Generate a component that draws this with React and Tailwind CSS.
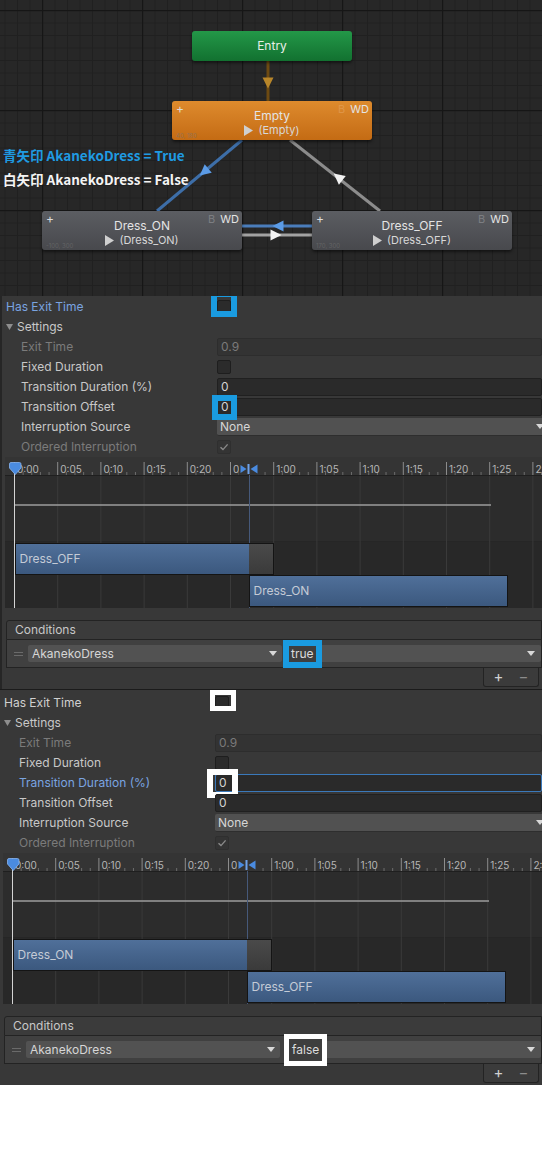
import React from "react";

// --- animator graph ---------------------------------------------------------

function arrowPts(cx, cy, dx, dy, len = 11, half = 5.5) {
  const m = Math.hypot(dx, dy);
  const ux = dx / m;
  const uy = dy / m;
  const tx = cx + (ux * len) / 2;
  const ty = cy + (uy * len) / 2;
  const bx = cx - (ux * len) / 2;
  const by = cy - (uy * len) / 2;
  return `${tx},${ty} ${bx - uy * half},${by + ux * half} ${bx + uy * half},${by - ux * half}`;
}

function PlayIcon() {
  return (
    <svg width="9" height="11" viewBox="0 0 9 11">
      <path d="M0 0L9 5.5L0 11Z" fill="#cfcfcf" />
    </svg>
  );
}

function StateNode({ pos, bg, title, motion, coords, bTone }) {
  return (
    <div
      className={`absolute ${pos} h-[39px] w-[200px] rounded-[3px] ${bg} text-[#e4e4e4] shadow-[0_2px_3px_rgba(0,0,0,0.5)]`}
    >
      <span className="absolute left-[4px] top-[1px] text-[12px] leading-[14px] text-[#dcdcdc]">+</span>
      <span className="absolute right-[3px] top-[2px] flex gap-[5px] text-[11px] leading-[12px]">
        <span className={bTone}>B</span>
        <span>WD</span>
      </span>
      <div className="flex flex-col items-center pt-[7px] leading-[15px]">
        <span className="text-[12px]">{title}</span>
        <span className="flex items-center gap-[5px] text-[11px] text-[#d8d8d8]">
          <PlayIcon />({motion})
        </span>
      </div>
      <span className="absolute bottom-[1px] left-[4px] text-[6px] leading-[6px] text-[#747474] opacity-60">
        {coords}
      </span>
    </div>
  );
}

function Graph() {
  return (
    <div className="relative h-[296px] overflow-hidden bg-[#272727]">
      <svg className="absolute inset-0" width="542" height="296">
        <defs>
          <pattern id="minorGrid" x="42" y="10" width="12.5" height="12.5" patternUnits="userSpaceOnUse">
            <path d="M0 0.5H12.5M0.5 0V12.5" stroke="#202020" strokeWidth="1" fill="none" />
          </pattern>
          <pattern id="majorGrid" x="42" y="10" width="100" height="100" patternUnits="userSpaceOnUse">
            <path d="M0 0.5H100M0.5 0V100" stroke="#161616" strokeWidth="1.5" fill="none" />
          </pattern>
        </defs>
        <rect width="542" height="296" fill="url(#minorGrid)" />
        <rect width="542" height="296" fill="url(#majorGrid)" />

        {/* entry -> empty */}
        <line x1="268" y1="61" x2="268" y2="101" stroke="#6d4a12" strokeWidth="3" />
        <polygon points={arrowPts(268, 83, 0, 1)} fill="#b8862a" />

        {/* empty -> dress_on (blue) */}
        <line x1="242" y1="140" x2="157" y2="211" stroke="#3d6ea8" strokeWidth="3" />
        <polygon points={arrowPts(204, 172, -85, 71)} fill="#5b9be6" />

        {/* dress_off -> empty (white) */}
        <line x1="290" y1="140" x2="380" y2="211" stroke="#8c8c8c" strokeWidth="3" />
        <polygon points={arrowPts(338, 177, -90, -71)} fill="#f2f2f2" />

        {/* between the two dress states */}
        <line x1="242" y1="226" x2="312" y2="226" stroke="#4a7dbb" strokeWidth="3" />
        <polygon points={arrowPts(278, 226, -1, 0)} fill="#5b9be6" />
        <line x1="242" y1="235" x2="312" y2="235" stroke="#a2a2a2" strokeWidth="3" />
        <polygon points={arrowPts(276, 235, 1, 0)} fill="#f2f2f2" />
      </svg>

      <div className="absolute left-[192px] top-[31px] flex h-[30px] w-[160px] items-center justify-center rounded-[3px] bg-gradient-to-b from-[#239848] to-[#127130] text-[12px] text-[#e8eee8] shadow-[0_2px_3px_rgba(0,0,0,0.5)]">
        Entry
      </div>

      <StateNode
        pos="left-[172px] top-[101px]"
        bg="bg-gradient-to-b from-[#de8b2d] to-[#c46b13]"
        title="Empty"
        motion="Empty"
        coords="40, 180"
        bTone="text-[#e6a866] opacity-50"
      />
      <StateNode
        pos="left-[42px] top-[211px]"
        bg="bg-gradient-to-b from-[#5b5d62] to-[#48494d]"
        title="Dress_ON"
        motion="Dress_ON"
        coords="-100, 300"
        bTone="text-[#7c7e82]"
      />
      <StateNode
        pos="left-[312px] top-[211px]"
        bg="bg-gradient-to-b from-[#5b5d62] to-[#48494d]"
        title="Dress_OFF"
        motion="Dress_OFF"
        coords="170, 300"
        bTone="text-[#7c7e82]"
      />

      <div className="absolute left-[3px] top-[146px] font-['Noto_Sans_CJK_JP',sans-serif] text-[13.5px] font-bold leading-[18px] text-[#1f9be2]">
        青矢印 AkanekoDress = True
      </div>
      <div className="absolute left-[3px] top-[170px] font-['Noto_Sans_CJK_JP',sans-serif] text-[13.5px] font-bold leading-[18px] text-[#f4f4f4]">
        白矢印 AkanekoDress = False
      </div>
    </div>
  );
}

// --- inspector bits ---------------------------------------------------------

function Row({ label, indent, tone = "text-[#c8c8c8]", children }) {
  return (
    <div className="flex h-5 items-center">
      <div className={`w-[211px] shrink-0 leading-5 ${indent ? "pl-[15px]" : ""} ${tone}`}>{label}</div>
      <div className="flex min-w-0 flex-1 items-center">{children}</div>
    </div>
  );
}

function CheckBox({ checked, disabled, children }) {
  return (
    <span
      className={`relative flex h-[14px] w-[14px] items-center justify-center rounded-[2px] border ${
        disabled ? "border-[#2f2f2f] bg-[#343434]" : "border-[#1e1e1e] bg-[#2b2b2b]"
      }`}
    >
      {checked && (
        <svg width="10" height="10" viewBox="0 0 10 10">
          <path d="M1.5 5.2L4 7.6L8.6 2.4" stroke="#8a8a8a" strokeWidth="1.4" fill="none" />
        </svg>
      )}
      {children}
    </span>
  );
}

function Field({ value, disabled, focused, children }) {
  let look = "border-[#202020] bg-[#2a2a2a] text-[#d4d4d4]";
  if (disabled) look = "border-[#2d2d2d] bg-[#333333] text-[#7a7a7a]";
  if (focused) look = "border-[#3a79bb] bg-[#2a2a2a] text-[#d4d4d4]";
  return (
    <div className={`relative flex h-[18px] flex-1 items-center rounded-[2px] border pl-[3px] leading-4 ${look}`}>
      {value}
      {children}
    </div>
  );
}

function DropArrow() {
  return (
    <svg width="8" height="5" viewBox="0 0 8 5">
      <path d="M0 0H8L4 5Z" fill="#d8d8d8" />
    </svg>
  );
}

function Dropdown({ value }) {
  return (
    <div className="-mr-[2px] flex h-[18px] flex-1 items-center justify-between rounded-[2px] border-b border-[#2e2e2e] bg-[#515151] pl-[3px] leading-4 text-[#d6d6d6]">
      <span>{value}</span>
      <DropArrow />
    </div>
  );
}

// --- transition timeline ----------------------------------------------------

const TICK0 = 9.5;
const STEP = 43.2;
const LABELS = ["0:00", "0:05", "0:10", "0:15", "0:20", "0:25", "1:00", "1:05", "1:10", "1:15", "1:20", "1:25", "2:00"];

function Timeline({ id, first, second }) {
  const xs = LABELS.map((_, i) => TICK0 + i * STEP);
  return (
    <div className="ml-[3px] h-[151px] overflow-hidden">
      <svg width="540" height="151" className="block" fontFamily="Inter, sans-serif">
        <defs>
          <linearGradient id={`bar${id}`} x1="0" y1="0" x2="0" y2="1">
            <stop offset="0" stopColor="#50709a" />
            <stop offset="1" stopColor="#3b587e" />
          </linearGradient>
          <linearGradient id={`gray${id}`} x1="0" y1="0" x2="0" y2="1">
            <stop offset="0" stopColor="#4a4a4a" />
            <stop offset="1" stopColor="#3a3a3a" />
          </linearGradient>
        </defs>
        <rect x="0" y="0" width="540" height="19" fill="#343434" />
        <rect x="0" y="19" width="540" height="65" fill="#2c2c2c" />
        <rect x="0" y="84" width="540" height="67" fill="#282828" />
        <line x1="0" y1="18.5" x2="540" y2="18.5" stroke="#1f1f1f" />
        <line x1="0" y1="84.5" x2="540" y2="84.5" stroke="#262626" />

        {xs.slice(1).map((x) => (
          <line key={`g${x}`} x1={x} y1="19" x2={x} y2="151" stroke="#3a3a3a" />
        ))}
        {xs.map((x, i) => (
          <g key={`t${i}`}>
            <line x1={x} y1="5" x2={x} y2="18" stroke="#8c8c8c" />
            {[1, 2, 3, 4].map((j) => (
              <line key={j} x1={x + (j * STEP) / 5} y1="15" x2={x + (j * STEP) / 5} y2="18" stroke="#6c6c6c" />
            ))}
            <text x={x + 2.5} y="16" fontSize="10" fill="#b6b6b6">
              {LABELS[i]}
            </text>
          </g>
        ))}

        <line x1={TICK0} y1="48" x2="486" y2="48" stroke="#9c9c9c" strokeWidth="1.5" />
        <line x1="244.5" y1="17" x2="244.5" y2="151" stroke="#46597a" />

        <rect x="10.5" y="86.5" width="258" height="31" fill={`url(#gray${id})`} stroke="#141414" />
        <rect x="10.5" y="86.5" width="233.5" height="31" fill={`url(#bar${id})`} />
        <rect x="10.5" y="86.5" width="258" height="31" fill="none" stroke="#141414" />
        <text x="14.5" y="106" fontSize="12" fill="#c4cbd6">
          {first}
        </text>
        <rect x="244.5" y="118.5" width="258" height="31" fill={`url(#bar${id})`} stroke="#141414" />
        <text x="248.5" y="138" fontSize="12" fill="#c4cbd6">
          {second}
        </text>

        <line x1={TICK0} y1="15" x2={TICK0} y2="151" stroke="#d4d4d4" />
        <path d="M4.5 7Q4.5 5.5 6 5.5H14.5Q16 5.5 16 7V11L10.25 17.5L4.5 11Z" fill="#4a8be0" stroke="#86b4f0" strokeWidth="0.8" />

        <rect x="234" y="3" width="20" height="15" fill="#343434" />
        <path d="M235.5 8L241.5 12L235.5 16Z" fill="#4a8be0" />
        <rect x="242.5" y="7" width="2" height="10" fill="#6fa2ea" />
        <path d="M252.5 7.5L245.5 12L252.5 16.5Z" fill="#4a8be0" />
      </svg>
    </div>
  );
}

// --- conditions -------------------------------------------------------------

function Conditions({ value, blue }) {
  return (
    <div className="ml-[4px] mt-[12px]">
      <div className="flex h-[20px] items-center rounded-tl-[3px] border border-[#232323] bg-[#3b3b3b] pl-[8px] text-[#c8c8c8]">
        Conditions
      </div>
      <div className="flex h-[28px] items-center border-x border-b border-[#232323] bg-[#404040] pl-[7px]">
        <span className="flex w-[9px] flex-col gap-[2px]">
          <span className="h-px bg-[#6a6a6a]" />
          <span className="h-px bg-[#6a6a6a]" />
        </span>
        <div className="ml-[5px] flex h-[17px] w-[254px] items-center justify-between rounded-[2px] bg-[#525252] pl-[4px] pr-[5px] text-[#d6d6d6]">
          <span>AkanekoDress</span>
          <DropArrow />
        </div>
        <div className="ml-[4px] flex h-[17px] flex-1 items-center justify-between rounded-[2px] bg-[#525252] pr-[6px] text-[#dcdcdc]">
          {blue ? (
            <span className="relative ml-[3px] flex h-[16px] items-center bg-[#3e3e3e] px-[2px]">
              {value}
              <span className="absolute -inset-[6px] border-[6px] border-[#1a9be0]" />
            </span>
          ) : (
            <span className="relative ml-[5px] flex h-[22px] items-center bg-[#3e3e3e] px-[3px]">
              {value}
              <span className="absolute -inset-[5px] border-[5px] border-white" />
            </span>
          )}
          <DropArrow />
        </div>
      </div>
      <div className="flex justify-end">
        <div className="mr-[3px] flex h-[19px] w-[56px] items-center justify-center gap-[15px] rounded-b-[3px] border-x border-b border-[#232323] bg-[#3b3b3b] text-[15px] leading-4">
          <span className="text-[#d0d0d0]">+</span>
          <span className="text-[#8c8c8c]">−</span>
        </div>
      </div>
    </div>
  );
}

// --- one transition inspector ----------------------------------------------

function Panel({ v }) {
  const one = v === 1;
  const blueLabel = "text-[#7aa4e0]";
  return (
    <div className={one ? "flex overflow-hidden border-b border-[#1b1b1b] bg-[#383838]" : "flex overflow-hidden bg-[#383838]"}>
      {one && <div className="w-[2px] shrink-0 bg-[#262626]" />}
      <div className={one ? "min-w-0 flex-1 pb-[2px] pt-[1px]" : "min-w-0 flex-1 pb-[2px] pt-[3px]"}>
        <div className="pl-[4px]">
          <Row label="Has Exit Time" tone={one ? blueLabel : "text-[#d0d0d0]"}>
            <CheckBox>
              {one ? (
                <span className="absolute -bottom-[4px] -left-[7px] -right-[7px] -top-[10px] border-[6px] border-[#1a9be0]" />
              ) : (
                <span className="absolute -bottom-[2px] -left-[6px] -right-[8px] -top-[7px] border-[5px] border-white" />
              )}
            </CheckBox>
          </Row>
          <div className="flex h-5 items-center gap-[4px] text-[#c8c8c8]">
            <svg width="7" height="6" viewBox="0 0 7 6">
              <path d="M0 0H7L3.5 6Z" fill="#8e8e8e" />
            </svg>
            <span>Settings</span>
          </div>
          <Row label="Exit Time" indent tone="text-[#7b7b7b]">
            <Field value="0.9" disabled />
          </Row>
          <Row label="Fixed Duration" indent>
            <CheckBox />
          </Row>
          <Row label="Transition Duration (%)" indent tone={one ? "text-[#c8c8c8]" : blueLabel}>
            <Field value="0" focused={!one}>
              {!one && <span className="absolute -left-[9px] -top-[6px] h-[29px] w-[31px] border-[6px] border-white" />}
            </Field>
          </Row>
          <Row label="Transition Offset" indent>
            <Field value="0">
              {one && <span className="absolute -left-[6px] -top-[4px] h-[25px] w-[25px] border-[6px] border-[#1a9be0]" />}
            </Field>
          </Row>
          <Row label="Interruption Source" indent>
            <Dropdown value="None" />
          </Row>
          <Row label="Ordered Interruption" indent tone="text-[#7b7b7b]">
            <CheckBox checked disabled />
          </Row>
        </div>
        <Timeline id={v} first={one ? "Dress_OFF" : "Dress_ON"} second={one ? "Dress_ON" : "Dress_OFF"} />
        <Conditions value={one ? "true" : "false"} blue={one} />
      </div>
    </div>
  );
}

export default function App() {
  return (
    <div className="min-h-[1168px] w-[542px] overflow-hidden bg-white font-['Inter','Noto_Sans',sans-serif] text-[12px]">
      <Graph />
      <Panel v={1} />
      <Panel v={2} />
    </div>
  );
}
